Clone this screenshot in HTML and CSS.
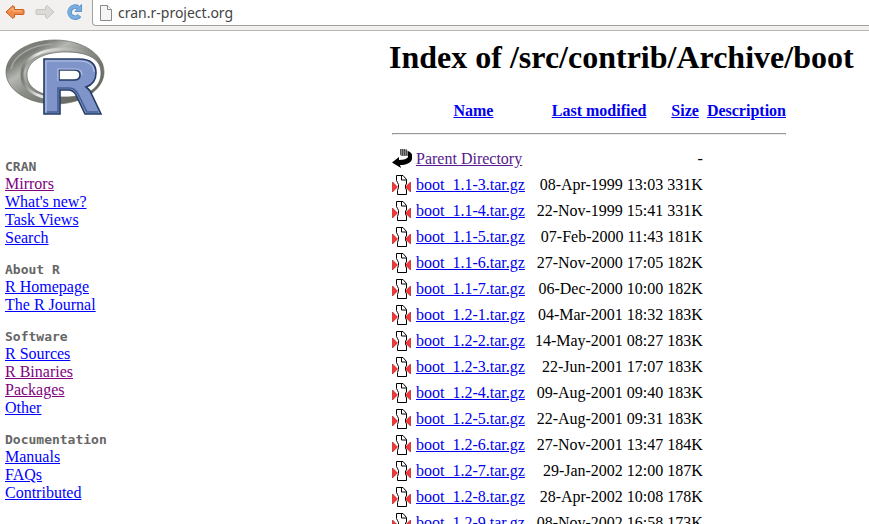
FILE: index.html
```html
<!DOCTYPE html>
<html lang="en">
<head>
<meta charset="utf-8">
<title>The Comprehensive R Archive Network</title>
<link rel="stylesheet" href="styles.css">
</head>
<body>
<svg class="defs" aria-hidden="true">
  <symbol id="tgz" viewBox="0 0 20 22">
    <path d="M4.500 1.500h6.500l3.500 4v4.500l-1 1v3l1 2v4.500h-9v-4l1-3v-3l-1-2-1-2z" fill="#fff" stroke="#000"/>
    <path d="M9.500 1.500v4.500h5" fill="none" stroke="#000"/>
    <path d="M.5 8l5 5-5 5zM18.500 8l-5 5 5 5z" fill="#f33" stroke="#911" stroke-width=".6"/>
  </symbol>
</svg>
<header class="toolbar">
  <button type="button" aria-label="Back">
    <svg width="20" height="18" viewBox="0 0 20 18"><path d="M1 9l7-6.500 1.500 1.500v2.500h8.500q1 0 1 1v3q0 1-1 1H9.500V14L8 15.500z" fill="#f08a45" stroke="#c95f20"/><path d="M4 8.500l4-3.500v3h9" fill="none" stroke="#fbc192"/></svg>
  </button>
  <button type="button" aria-label="Forward">
    <svg width="20" height="18" viewBox="0 0 20 18"><path d="M19 9l-7-6.500-1.500 1.500v2.500H2q-1 0-1 1v3q0 1 1 1h8.500V14l1.500 1.500z" fill="#dcdad7" stroke="#c6c4c1"/></svg>
  </button>
  <button type="button" aria-label="Reload">
    <svg width="20" height="18" viewBox="0 0 20 18"><path d="M13 4.500A5.500 5.500 0 1 0 14.500 12.500" fill="none" stroke="#5b93cd" stroke-width="4.600"/><path d="M16.500 1.500v7H10z" fill="#7baee0" stroke="#5b93cd"/><path d="M13.500 5A5.500 5.500 0 1 0 14 12.500" fill="none" stroke="#7baee0" stroke-width="2.800"/></svg>
  </button>
  <label class="address">
    <svg width="12" height="16" viewBox="0 0 12 16"><path d="M.5 .5h7l4 4v11H.5z" fill="#f5f5f5" stroke="#888"/><path d="M7.500.5v4h4" fill="#fff" stroke="#888"/></svg>
    <input type="text" value="cran.r-project.org" aria-label="Address">
  </label>
</header>
<div class="page">
  <nav class="sidebar">
    <svg class="logo" width="102" height="78" viewBox="0 0 102 78" role="img" aria-label="R">
      <defs>
        <linearGradient id="ring" x1="0" y1="0" x2="1" y2="1"><stop offset="0" stop-color="#8b8d88"/><stop offset=".22" stop-color="#797b75"/><stop offset=".34" stop-color="#b5b7b2"/><stop offset=".5" stop-color="#8a8c86"/><stop offset="1" stop-color="#50524c"/></linearGradient>
        <linearGradient id="shine" x1="0" y1="0" x2="1" y2="0"><stop offset="0" stop-color="#777a74"/><stop offset=".2" stop-color="#e8e9e6"/><stop offset=".6" stop-color="#b3b5b0"/><stop offset="1" stop-color="#71736d"/></linearGradient>
      </defs>
      <path fill-rule="evenodd" d="M50 1C77 1 99 15 99 33S77 65 50 65 1 51 1 33 23 1 50 1zM60 13C38 13 22 22 22 36s16 22 38 22 36-9 36-24-14-21-36-21z" fill="url(#ring)" stroke="#666861" stroke-width=".7"/>
      <path d="M50 60C29 58 16 49 17 34 18 20 35 10 59 10 81 10 93 18 97 27" fill="none" stroke="url(#shine)" stroke-width="3"/>
      <path d="M6 30C9 16 26 6 48 5" fill="none" stroke="#a3a5a0" stroke-width="1.500"/>
      <path fill-rule="evenodd" d="M39 20h35c11 0 17 5 17 14 0 7-4 12-10 14 3 2 5 5 6 8l9 19H80L71 56c-2-4-4-5-8-5h-8v24H39zM54 31v10h15c4 0 6-2 6-5s-2-5-6-5z" fill="#7f95c9" stroke="#263c66" stroke-width="1.600"/>
      <path d="M41 73V22h33c9 0 15 4 15 11M53 42V30h17c4 0 7 2 7 6" fill="none" stroke="#b6c4e6" stroke-width="1.200"/>
      <path d="M42 73h11V49h11c5 0 7 2 9 6l9 18h11" fill="none" stroke="#455f95" stroke-width="1.600"/>
    </svg>
    <section>
      <h2>CRAN</h2>
      <a class="visited" href="#">Mirrors</a>
      <a href="#">What's new?</a>
      <a href="#">Task Views</a>
      <a href="#">Search</a>
    </section>
    <section>
      <h2>About R</h2>
      <a href="#">R Homepage</a>
      <a href="#">The R Journal</a>
    </section>
    <section>
      <h2>Software</h2>
      <a href="#">R Sources</a>
      <a class="visited" href="#">R Binaries</a>
      <a class="visited" href="#">Packages</a>
      <a href="#">Other</a>
    </section>
    <section>
      <h2>Documentation</h2>
      <a href="#">Manuals</a>
      <a href="#">FAQs</a>
      <a href="#">Contributed</a>
    </section>
  </nav>
  <main>
    <h1>Index of /src/contrib/Archive/boot</h1>
    <table>
      <thead>
        <tr><th></th><th><a href="#">Name</a></th><th><a href="#">Last modified</a></th><th><a href="#">Size</a></th><th><a href="#">Description</a></th></tr>
        <tr><th colspan="5"><hr></th></tr>
      </thead>
      <tbody>
        <tr><td><svg width="20" height="22" viewBox="0 0 20 22"><path d="M8 1h5l3 2v5H9l-1-2z" fill="#888"/><path d="M8 2h7M8 4h8M8 6h8" stroke="#222" stroke-dasharray="1 1"/><path d="M9 3h7M9 5h7M9 7h7" stroke="#444" stroke-dasharray="1 1" stroke-dashoffset="1"/><path d="M0 14.500L7 9v3c5 0 8-1 9-3V3c2 1 4 2 4 4v4c-1 4-6 6-12 6l1 3z" fill="#000"/></svg></td><td><a class="parent" href="#">Parent Directory</a></td><td></td><td>-</td><td></td></tr>
        <tr><td><svg width="20" height="22"><use href="#tgz"/></svg></td><td><a href="#">boot_1.1-3.tar.gz</a></td><td>08-Apr-1999 13:03</td><td>331K</td><td></td></tr>
        <tr><td><svg width="20" height="22"><use href="#tgz"/></svg></td><td><a href="#">boot_1.1-4.tar.gz</a></td><td>22-Nov-1999 15:41</td><td>331K</td><td></td></tr>
        <tr><td><svg width="20" height="22"><use href="#tgz"/></svg></td><td><a href="#">boot_1.1-5.tar.gz</a></td><td>07-Feb-2000 11:43</td><td>181K</td><td></td></tr>
        <tr><td><svg width="20" height="22"><use href="#tgz"/></svg></td><td><a href="#">boot_1.1-6.tar.gz</a></td><td>27-Nov-2000 17:05</td><td>182K</td><td></td></tr>
        <tr><td><svg width="20" height="22"><use href="#tgz"/></svg></td><td><a href="#">boot_1.1-7.tar.gz</a></td><td>06-Dec-2000 10:00</td><td>182K</td><td></td></tr>
        <tr><td><svg width="20" height="22"><use href="#tgz"/></svg></td><td><a href="#">boot_1.2-1.tar.gz</a></td><td>04-Mar-2001 18:32</td><td>183K</td><td></td></tr>
        <tr><td><svg width="20" height="22"><use href="#tgz"/></svg></td><td><a href="#">boot_1.2-2.tar.gz</a></td><td>14-May-2001 08:27</td><td>183K</td><td></td></tr>
        <tr><td><svg width="20" height="22"><use href="#tgz"/></svg></td><td><a href="#">boot_1.2-3.tar.gz</a></td><td>22-Jun-2001 17:07</td><td>183K</td><td></td></tr>
        <tr><td><svg width="20" height="22"><use href="#tgz"/></svg></td><td><a href="#">boot_1.2-4.tar.gz</a></td><td>09-Aug-2001 09:40</td><td>183K</td><td></td></tr>
        <tr><td><svg width="20" height="22"><use href="#tgz"/></svg></td><td><a href="#">boot_1.2-5.tar.gz</a></td><td>22-Aug-2001 09:31</td><td>183K</td><td></td></tr>
        <tr><td><svg width="20" height="22"><use href="#tgz"/></svg></td><td><a href="#">boot_1.2-6.tar.gz</a></td><td>27-Nov-2001 13:47</td><td>184K</td><td></td></tr>
        <tr><td><svg width="20" height="22"><use href="#tgz"/></svg></td><td><a href="#">boot_1.2-7.tar.gz</a></td><td>29-Jan-2002 12:00</td><td>187K</td><td></td></tr>
        <tr><td><svg width="20" height="22"><use href="#tgz"/></svg></td><td><a href="#">boot_1.2-8.tar.gz</a></td><td>28-Apr-2002 10:08</td><td>178K</td><td></td></tr>
        <tr><td><svg width="20" height="22"><use href="#tgz"/></svg></td><td><a href="#">boot_1.2-9.tar.gz</a></td><td>08-Nov-2002 16:58</td><td>173K</td><td></td></tr>
      </tbody>
    </table>
  </main>
</div>
</body>
</html>
```
FILE: styles.css
```css
* { box-sizing: border-box; }
body {
  margin: 0;
  height: 100vh;
  overflow: hidden;
  display: flex;
  flex-direction: column;
  background: #fff;
  color: #000;
  font: 16px/18px "Liberation Serif", serif;
}
a { color: #00e; }
.defs { display: none; }

.toolbar {
  display: flex;
  align-items: flex-start;
  gap: 10px;
  padding-left: 5px;
  flex: none;
  height: 31px;
  background: #f2f1f0;
  border-bottom: 1px solid #b8b6b4;
}
.toolbar button {
  display: block;
  width: 20px;
  height: 24px;
  padding: 3px 0;
  border: 0;
  background: none;
}
.toolbar svg { display: block; flex: none; }
.address {
  flex: 1;
  display: flex;
  align-items: center;
  gap: 6px;
  height: 26px;
  padding-left: 7px;
  margin-left: -3px;
  background: #fff;
  border: 1px solid #a3a19f;
  border-width: 0 0 1px 1px;
  border-bottom-left-radius: 4px;
}
.address input {
  flex: 1;
  min-width: 0;
  padding: 0;
  border: 0;
  outline: 0;
  background: none;
  color: #444;
  font: 14px/20px "Noto Sans", sans-serif;
}

.page {
  flex: 1;
  min-height: 0;
  display: grid;
  grid-template-columns: 389px 1fr;
}
.sidebar { padding: 8px 5px; }
.logo { display: block; margin-bottom: 42px; }
.sidebar section { margin-bottom: 15px; }
.sidebar h2 {
  margin: 0;
  color: #666;
  font: bold 13px/16px "DejaVu Sans Mono", monospace;
}
.sidebar a { display: table; color: #00f; }
.sidebar a.visited { color: #800080; }

h1 {
  margin: 8px 0 23px;
  font-size: 32px;
  line-height: 37px;
  white-space: nowrap;
}
table { border-spacing: 2px; }
th, td { padding: 1px; white-space: nowrap; }
td:nth-child(2) { padding-right: 7px; }
td:nth-child(3), td:nth-child(4) { text-align: right; }
td svg { display: block; }
.parent { color: #551a8b; }
hr {
  margin: 9px 0;
  border: 1px solid #999;
  border-bottom-color: #eee;
}
```
